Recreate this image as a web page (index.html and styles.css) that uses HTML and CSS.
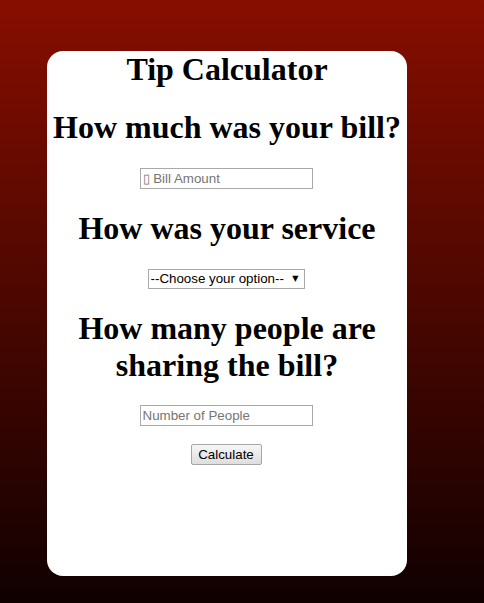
FILE: index.html
```html
<!DOCTYPE html>
<html>
<head>
<meta charset="utf-8">
<title>Tip Calculator</title>
<link rel="stylesheet" href="styles.css">
</head>
<body>
<div class="card">
  <h1 class="title">Tip Calculator</h1>
  <h1 class="question">How much was your bill?</h1>
  <div class="field"><input class="text-input" type="text" placeholder="▯ Bill Amount"></div>
  <h1 class="question">How was your service</h1>
  <div class="field">
    <span class="select-wrap">
      <select class="select">
        <option>--Choose your option--</option>
      </select>
      <span class="arrow">▼</span>
    </span>
  </div>
  <h1 class="question">How many people are sharing the bill?</h1>
  <div class="field"><input class="text-input" type="text" placeholder="Number of People"></div>
  <div class="actions"><button class="btn" type="button">Calculate</button></div>
</div>
</body>
</html>
```
FILE: styles.css
```css
html, body {
  margin: 0;
  height: 100%;
}
body {
  background: linear-gradient(to bottom, #870e00 0%, #100000 100%);
  font-family: "Liberation Serif", serif;
  padding: 51px 0 0 47px;
  box-sizing: border-box;
}
.card {
  width: 360px;
  height: 525px;
  background: #fff;
  border-radius: 16px;
  text-align: center;
  box-sizing: border-box;
  padding: 0;
}
.title {
  margin: 0;
  font-size: 32px;
  line-height: 37px;
}
.question {
  margin: 21.4px 0;
  font-size: 32px;
  line-height: 37px;
}
.field {
  line-height: 0;
  padding-right: 2px;
}
.text-input {
  width: 173px;
  height: 21px;
  box-sizing: border-box;
  border: 1px solid #a9a9a9;
  padding: 1px 2px;
  font-family: "Liberation Sans", Arial, sans-serif;
  font-size: 13.33px;
  color: #000;
  background: #fff;
  outline: none;
  vertical-align: top;
  margin: 0;
}
.text-input::placeholder {
  color: #757575;
}
.select-wrap {
  position: relative;
  display: inline-block;
  vertical-align: top;
}
.select {
  -webkit-appearance: none;
  appearance: none;
  width: 157px;
  height: 20px;
  box-sizing: border-box;
  border: 1px solid #a9a9a9;
  border-radius: 0;
  background: #fff;
  padding: 0 18px 0 2px;
  font-family: "Liberation Sans", Arial, sans-serif;
  font-size: 13.33px;
  color: #000;
  margin: 0;
  vertical-align: top;
  outline: none;
}
.arrow {
  position: absolute;
  right: 6px;
  top: 5px;
  font-family: "DejaVu Sans", sans-serif;
  font-size: 8px;
  line-height: 10px;
  color: #000;
  pointer-events: none;
}
.actions {
  margin-top: 18px;
  line-height: 0;
  padding-right: 2px;
}
.btn {
  width: 71px;
  height: 21px;
  box-sizing: border-box;
  border: 1px solid #a6a6a6;
  border-radius: 2px;
  background: linear-gradient(to bottom, #f6f6f6, #dedede);
  font-family: "Liberation Sans", Arial, sans-serif;
  font-size: 13.33px;
  color: #000;
  padding: 0;
  margin: 0;
  vertical-align: top;
}
```
